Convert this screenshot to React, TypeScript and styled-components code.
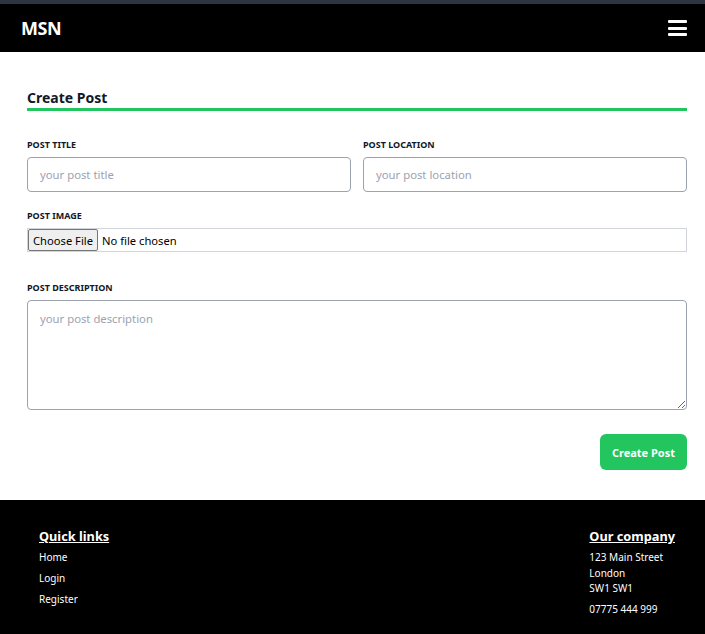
import React from "react";
import styled, { createGlobalStyle } from "styled-components";

const Global = createGlobalStyle`
  html, body { margin: 0; padding: 0; background: #ffffff; }
  body { font-family: "Noto Sans", "Open Sans", sans-serif; color: #111827; }
  * { box-sizing: border-box; }
`;

const TopStrip = styled.div`
  height: 4px;
  background: #2f3441;
`;

const Nav = styled.nav`
  height: 48px;
  background: #000;
  display: flex;
  align-items: center;
  justify-content: space-between;
  padding: 0 18px 0 21px;
`;

const Brand = styled.div`
  color: #fff;
  font-weight: 700;
  font-size: 18px;
  letter-spacing: -0.5px;
`;

const Burger = styled.button`
  background: none;
  border: 0;
  padding: 0;
  width: 19px;
  display: flex;
  flex-direction: column;
  gap: 3.5px;
  cursor: pointer;
  span {
    display: block;
    height: 3px;
    background: #fff;
    border-radius: 1px;
  }
`;

const Main = styled.main`
  padding: 37px 18px 30px 27px;
`;

const Heading = styled.h2`
  margin: 0;
  font-size: 14px;
  font-weight: 700;
  color: #111827;
  padding-bottom: 1px;
  border-bottom: 3px solid #22c55e;
  line-height: 18px;
`;

const Form = styled.form`
  margin-top: 28px;
  display: flex;
  flex-direction: column;
`;

const Row = styled.div`
  display: grid;
  grid-template-columns: 1fr 1fr;
  gap: 12px;
`;

const Field = styled.div<{ $mb?: number }>`
  display: flex;
  flex-direction: column;
  margin-bottom: ${(p) => p.$mb ?? 0}px;
`;

const Label = styled.label`
  font-size: 9px;
  font-weight: 700;
  text-transform: uppercase;
  color: #111827;
  line-height: 12px;
  margin-bottom: 6px;
`;

const Input = styled.input`
  height: 35px;
  border: 1px solid #9ca3af;
  border-radius: 4px;
  padding: 0 12px;
  font-family: inherit;
  font-size: 11.3px;
  color: #111827;
  outline: none;
  &::placeholder { color: #9ca3af; }
`;

const FileInput = styled.input`
  height: 24px;
  width: 100%;
  border: 1px solid #d1d5db;
  font-family: "Noto Sans", sans-serif;
  font-size: 11.2px;
  color: #000;
  padding: 0;
  &::file-selector-button {
    font-family: "Noto Sans", sans-serif;
    font-size: 11.2px;
    height: 22px;
    margin: 0 4px 0 0;
    padding: 0 4px;
    border: 1px solid #767676;
    border-radius: 2px;
    background: #efefef;
    color: #000;
  }
`;

const TextArea = styled.textarea`
  height: 110px;
  border: 1px solid #9ca3af;
  border-radius: 4px;
  padding: 10px 12px;
  font-family: inherit;
  font-size: 11.3px;
  resize: vertical;
  outline: none;
  &::placeholder { color: #9ca3af; }
`;

const Actions = styled.div`
  display: flex;
  justify-content: flex-end;
  margin-top: 24px;
`;

const SubmitButton = styled.button`
  height: 36px;
  padding: 0 12px;
  border: 0;
  border-radius: 6px;
  background: #22c55e;
  color: #fff;
  font-family: inherit;
  font-weight: 700;
  font-size: 11px;
  cursor: pointer;
`;

const Footer = styled.footer`
  background: #000;
  color: #fff;
  display: flex;
  justify-content: space-between;
  padding: 27px 30px 0 39px;
  height: 134px;
`;

const FooterCol = styled.div`
  display: flex;
  flex-direction: column;
`;

const FooterTitle = styled.h3<{ $mb: number }>`
  margin: 0 0 ${(p) => p.$mb}px 0;
  font-size: 12.75px;
  font-weight: 700;
  text-decoration: underline;
  line-height: 18px;
`;

const FooterLink = styled.a`
  color: #fff;
  text-decoration: none;
  font-size: 10px;
  line-height: 21px;
`;

const AddressLine = styled.div<{ $gap?: number }>`
  font-size: 10px;
  line-height: 15.5px;
  margin-top: ${(p) => p.$gap ?? 0}px;
`;

export default function App() {
  return (
    <>
      <Global />
      <TopStrip />
      <Nav>
        <Brand>MSN</Brand>
        <Burger aria-label="menu">
          <span />
          <span />
          <span />
        </Burger>
      </Nav>
      <Main>
        <Heading>Create Post</Heading>
        <Form onSubmit={(e) => e.preventDefault()}>
          <Row>
            <Field $mb={18}>
              <Label>Post Title</Label>
              <Input placeholder="your post title" />
            </Field>
            <Field $mb={18}>
              <Label>Post Location</Label>
              <Input placeholder="your post location" />
            </Field>
          </Row>
          <Field $mb={30}>
            <Label>Post Image</Label>
            <FileInput type="file" />
          </Field>
          <Field>
            <Label>Post Description</Label>
            <TextArea placeholder="your post description" />
          </Field>
          <Actions>
            <SubmitButton type="submit">Create Post</SubmitButton>
          </Actions>
        </Form>
      </Main>
      <Footer>
        <FooterCol>
          <FooterTitle $mb={2}>Quick links</FooterTitle>
          <FooterLink href="#">Home</FooterLink>
          <FooterLink href="#">Login</FooterLink>
          <FooterLink href="#">Register</FooterLink>
        </FooterCol>
        <FooterCol>
          <FooterTitle $mb={5}>Our company</FooterTitle>
          <AddressLine>123 Main Street</AddressLine>
          <AddressLine>London</AddressLine>
          <AddressLine>SW1 SW1</AddressLine>
          <AddressLine $gap={5.5}>07775 444 999</AddressLine>
        </FooterCol>
      </Footer>
    </>
  );
}
